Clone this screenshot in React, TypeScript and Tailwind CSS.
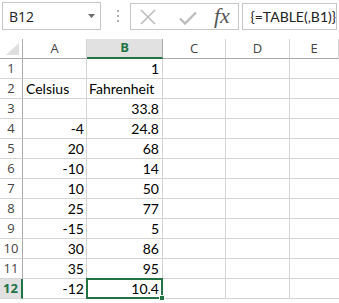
import React from "react";

const rows: [string, string, string][] = [
  ["1", "", "1"],
  ["2", "Celsius", "Fahrenheit"],
  ["3", "", "33.8"],
  ["4", "-4", "24.8"],
  ["5", "20", "68"],
  ["6", "-10", "14"],
  ["7", "10", "50"],
  ["8", "25", "77"],
  ["9", "-15", "5"],
  ["10", "30", "86"],
  ["11", "35", "95"],
  ["12", "-12", "10.4"],
];

const cellFont = { fontFamily: "Lato, 'Open Sans', sans-serif" };
const uiFont = { fontFamily: "'Open Sans', 'Noto Sans', sans-serif" };

export default function App() {
  return (
    <div className="w-[339px] h-[303px] overflow-hidden bg-white relative">
      {/* formula bar */}
      <div className="h-[39px] flex items-start pt-[2px]">
        <div className="ml-[2px] w-[101px] h-[28px] border border-[#c6c6c6] flex items-center justify-between pl-[6px] pr-[5px]">
          <span className="text-[14px] text-[#222] mt-[1px]" style={uiFont}>B12</span>
          <svg width="7" height="4" viewBox="0 0 7 4"><path d="M0 0H7L3.5 4Z" fill="#6d6d6d" /></svg>
        </div>
        <div className="ml-[15px] w-[3px] h-[28px] flex flex-col items-center justify-center gap-[3px]">
          <div className="w-[2px] h-[2px] bg-[#b0b0b0]" />
          <div className="w-[2px] h-[2px] bg-[#b0b0b0]" />
          <div className="w-[2px] h-[2px] bg-[#b0b0b0]" />
        </div>
        <div className="ml-[11px] w-[111px] h-[27px] mt-[1px] border border-[#c6c6c6] flex items-center">
          <svg className="ml-[9px]" width="16" height="16" viewBox="0 0 16 16">
            <path d="M1 1L15 15M15 1L1 15" stroke="#bdbdbd" strokeWidth="1.6" />
          </svg>
          <svg className="ml-[23px] mt-[3px]" width="18" height="14" viewBox="0 0 18 14">
            <path d="M1 7.5L6 12.5L17 1.5" stroke="#bdbdbd" strokeWidth="2.4" fill="none" />
          </svg>
          <span
            className="ml-[17px] text-[22px] italic text-[#555] leading-none mb-[2px]"
            style={{ fontFamily: "'Liberation Serif', 'DejaVu Serif', serif" }}
          >
            fx
          </span>
        </div>
        <div className="ml-[3px] flex-1 mr-[2px] h-[27px] mt-[1px] border border-[#c6c6c6] flex items-center pl-[8px]">
          <span className="text-[14px] text-[#222]" style={cellFont}>{"{=TABLE(,B1)}"}</span>
        </div>
      </div>

      {/* grid */}
      <div
        className="grid"
        style={{ gridTemplateColumns: "23px 64px 76px 63px 64px 1fr" }}
      >
        {/* header row */}
        <div className="h-[20px] border-r border-b border-[#ababab] relative">
          <svg className="absolute left-[6px] top-[4px]" width="13" height="12" viewBox="0 0 13 12">
            <path d="M13 0V12H0Z" fill="#dfdfdf" />
          </svg>
        </div>
        {["A", "B", "C", "D", "E"].map((c) => (
          <div
            key={c}
            className={
              c === "B"
                ? "h-[20px] bg-[#e1e1e1] border-r border-[#ababab] border-b-2 border-b-[#217346] flex items-center justify-center text-[13px] font-bold text-[#217346]"
                : "h-[20px] border-r border-b border-[#d4d4d4] border-b-[#ababab] flex items-center justify-center text-[13px] text-[#444]"
            }
            style={uiFont}
          >
            {c}
          </div>
        ))}
        {rows.map(([n, a, b]) => {
          const sel = n === "12";
          return (
            <React.Fragment key={n}>
              <div
                className={
                  sel
                    ? "h-[20px] bg-[#e1e1e1] border-r-2 border-r-[#217346] border-b border-b-[#d4d4d4] flex items-center justify-center text-[13px] font-bold text-[#217346]"
                    : "h-[20px] border-r border-r-[#ababab] border-b border-b-[#d4d4d4] flex items-center justify-center text-[13px] text-[#444]"
                }
                style={uiFont}
              >
                {n}
              </div>
              <div
                className={
                  "h-[20px] border-r border-b border-[#d4d4d4] flex items-end pb-[1px] text-[14px] text-black leading-[17px] " +
                  (n === "2" ? "justify-start pl-[3px]" : "justify-end pr-[2px]")
                }
                style={cellFont}
              >
                {a}
              </div>
              <div
                className={
                  "h-[20px] border-r border-b border-[#d4d4d4] flex items-end pb-[1px] text-[14px] text-black leading-[17px] relative " +
                  (n === "2" ? "justify-start pl-[2px]" : "justify-end pr-[3px]")
                }
                style={cellFont}
              >
                {b}
                {sel && (
                  <>
                    <div className="absolute -left-[1px] -top-[1px] -right-[1px] -bottom-[1px] border-2 border-[#217346]" />
                    <div className="absolute -right-[3px] -bottom-[3px] w-[6px] h-[6px] bg-[#217346] border border-white" />
                  </>
                )}
              </div>
              <div className="h-[20px] border-r border-b border-[#d4d4d4]" />
              <div className="h-[20px] border-r border-b border-[#d4d4d4]" />
              <div className="h-[20px] border-b border-[#d4d4d4]" />
            </React.Fragment>
          );
        })}
      </div>
    </div>
  );
}
